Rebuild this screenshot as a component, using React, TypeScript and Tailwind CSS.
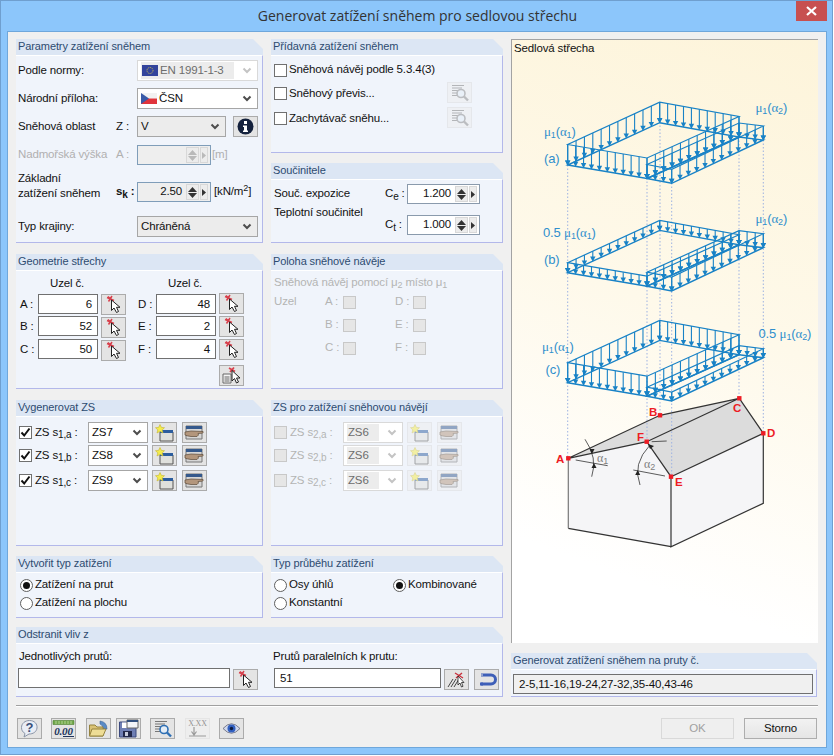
import type { ReactNode } from "react";

type Pt = [number, number];

// roof corners in plan, relative to corner A of each snow load drawing
const PLAN: Record<string, Pt> = {
  A: [0, 0],
  B: [92, -42.3],
  C: [171.3, -28],
  F: [79.3, 13.5],
  E: [104, 18.3],
  D: [195.6, -25],
};
const BLUE = "#1882c6";

function Panel({ title, className, bodyClass, children }: { title: string; className?: string; bodyClass?: string; children?: ReactNode }) {
  return (
    <div className={`flex flex-col ${className ?? ""}`}>
      <div className="h-[16px] shrink-0 bg-[#dce6f4] pl-[2px] text-[11px] leading-[15px] text-[#2d4b70] tracking-[-0.1px] [clip-path:polygon(0_0,calc(100%-10px)_0,100%_10px,100%_100%,0_100%)]">
        {title}
      </div>
      <div className={`flex-1 border-t border-r border-b border-t-white border-r-[#b3b8ea] border-b-[#b3b8ea] bg-[#f0f4fb] ${bodyClass ?? ""}`}>{children}</div>
    </div>
  );
}

function Chevron({ off }: { off?: boolean }) {
  return (
    <svg width="10" height="7" viewBox="0 0 10 7" className="shrink-0">
      <path d="M1.5 1.5 L5 5 L8.5 1.5" fill="none" stroke={off ? "#c4c4c4" : "#4d4d4d"} strokeWidth="2" />
    </svg>
  );
}

function Combo({ value, className, gray, off, flag }: { value: string; className?: string; gray?: boolean; off?: boolean; flag?: ReactNode }) {
  return (
    <div
      className={`flex h-[21px] items-center justify-between border pl-[3px] pr-[5px] ${off ? "border-[#d9d9d9] bg-white text-[#6d6d6d]" : "border-[#a6a6a6]"} ${gray ? "bg-[#ececec]" : off ? "" : "bg-white"} ${className ?? ""}`}
    >
      <span className={`flex h-[17px] flex-1 items-center gap-[1px] leading-none ${off ? "mr-[8px] bg-[#ececec] pl-[1px]" : ""}`}>
        {flag}
        {value}
      </span>
      <Chevron off={off} />
    </div>
  );
}

function Spin({ value, className, off, gray }: { value?: string; className?: string; off?: boolean; gray?: boolean }) {
  const c = off ? "#b9b9b9" : "#333";
  return (
    <div className={`flex h-[20px] items-center border border-[#7f9db9] ${gray ? "bg-[#eeeeee]" : "bg-white"} ${className ?? ""}`}>
      <span className="flex-1 pr-[4px] text-right leading-none">{value}</span>
      <span className="flex h-[16px] w-[13px] flex-col items-center justify-center gap-[1px] border border-[#d8d8d8] bg-[#ececec]">
        <svg width="9" height="5"><path d="M4.5 0 L9 5 H0 Z" fill={c} /></svg>
        <svg width="9" height="5"><path d="M0 0 H9 L4.5 5 Z" fill={c} /></svg>
      </span>
      <span className="ml-[1px] mr-[2px] flex h-[16px] w-[8px] items-center justify-center border border-[#d8d8d8] bg-[#ececec]">
        <svg width="4" height="7"><path d="M0 0 L4 3.5 L0 7 Z" fill={c} /></svg>
      </span>
    </div>
  );
}

function IconBtn({ children, off, className }: { children: ReactNode; off?: boolean; className?: string }) {
  return (
    <div className={`flex h-[21px] w-[25px] shrink-0 items-center justify-center border ${off ? "border-[#dcdcdc] bg-[#eeeeee] opacity-50" : "border-[#ababab] bg-[#e4e4e4]"} ${className ?? ""}`}>
      {children}
    </div>
  );
}

function PickIcon() {
  return (
    <svg width="21" height="19" viewBox="0 0 21 19">
      <path d="M4 2.5 L11 5.5 M9 1 L5.5 6.5 M5 1.5 L9.5 6" stroke="#d8404c" strokeWidth="1.5" />
      <path d="M8.5 5 V15.5 L11 13 L13.5 17.5 L15.5 16.5 L13.5 12.3 H17 Z" fill="#fff" stroke="#222" strokeWidth="1" strokeLinejoin="round" />
    </svg>
  );
}

function PickListIcon() {
  return (
    <svg width="23" height="19" viewBox="0 0 23 19">
      <path d="M3 8 H11 V17 H3 Z" fill="#f4f4f4" stroke="#666" />
      <path d="M4.5 11 H9.5 M4.5 13 H9.5 M4.5 15 H9.5" stroke="#666" />
      <path d="M9 2 L15 5.5 M14 1.5 L10 6" stroke="#d8404c" strokeWidth="1.8" />
      <path d="M12 4.5 V15 L14.5 12.5 L16.5 17 L18.5 16 L16.5 12 H20 Z" fill="#fff" stroke="#222" strokeWidth="1" strokeLinejoin="round" />
    </svg>
  );
}

function NewWinIcon() {
  return (
    <svg width="20" height="18" viewBox="0 0 20 18">
      <path d="M5 8 H18 V17 H5 Z" fill="#dfe0dc" stroke="#555" />
      <path d="M5 6 H18 V9 H5 Z" fill="#2c5d9e" />
      <path d="M5 0.5 L6.4 3.4 L9.5 3.7 L7.2 5.9 L8 9 L5 7.3 L2 9 L2.8 5.9 L0.5 3.7 L3.6 3.4 Z" fill="#f4ec4c" stroke="#c4b62e" strokeWidth="0.6" />
    </svg>
  );
}

function HandWinIcon() {
  return (
    <svg width="21" height="17" viewBox="0 0 21 17">
      <path d="M2 2 H18 V15 H2 Z" fill="#d6d6d6" stroke="#777" />
      <path d="M2 2 H18 V5 H2 Z" fill="#35598c" />
      <path d="M1 8 L7 7 L19 7.5 Q20 8.5 18 9.2 L14 9.5 L14.5 11 L13 12.5 L7 12.5 Q3 12 1 11 Z" fill="#b3967c" stroke="#5c4a3a" strokeWidth="0.7" />
    </svg>
  );
}

function SearchIcon({ gray }: { gray?: boolean }) {
  const c = gray ? "#888" : "#2e6fb4";
  return (
    <svg width="20" height="18" viewBox="0 0 20 18">
      <path d="M2 1.5 H14 M2 4 H12 M2 6.5 H8 M2 9 H7 M2 11.5 H7" stroke="#777" strokeWidth="1" />
      <circle cx="11" cy="9.5" r="4" fill="#e4edf6" stroke={c} strokeWidth="1.6" />
      <path d="M14 12.5 L18 16.5" stroke={c} strokeWidth="2.4" />
    </svg>
  );
}

function CheckBox({ checked, off }: { checked?: boolean; off?: boolean }) {
  return (
    <div className={`flex h-[13px] w-[13px] shrink-0 items-center justify-center border ${off ? "border-[#c8c8c8] bg-[#e6e6e6]" : "border-[#707070] bg-white"}`}>
      {checked && (
        <svg width="11" height="11" viewBox="0 0 11 11">
          <path d="M1.5 5.5 L4.2 8.5 L9.5 1.5" fill="none" stroke="#111" strokeWidth="2" />
        </svg>
      )}
    </div>
  );
}

function Radio({ label, checked, className }: { label: string; checked?: boolean; className?: string }) {
  return (
    <div className={`flex items-center gap-[1px] ${className ?? ""}`}>
      <div className="flex h-[13px] w-[13px] shrink-0 items-center justify-center rounded-full border border-[#5f5f5f] bg-white">
        {checked && <div className="h-[7px] w-[7px] rounded-full bg-[#111]" />}
      </div>
      <span className="pl-[1px] leading-none">{label}</span>
    </div>
  );
}

function NodeRow({ name, value, btnOffset, className }: { name: string; value: string; btnOffset: string; className?: string }) {
  return (
    <div className={`flex h-[20px] items-start ${className ?? ""}`}>
      <span className="w-[20px] shrink-0 pl-[2px] leading-[20px]">{name} :</span>
      <div className="h-[20px] w-[60px] border border-[#707070] bg-white pr-[5px] text-right leading-[18px]">{value}</div>
      <IconBtn className={`ml-[3px] ${btnOffset}`}>
        <PickIcon />
      </IconBtn>
    </div>
  );
}

function ZsRow({ sub, value, off, className }: { sub: string; value: string; off?: boolean; className?: string }) {
  return (
    <div className={`flex h-[21px] items-center ${className ?? ""}`}>
      <CheckBox checked={!off} off={off} />
      <span className={`ml-[3px] w-[53px] whitespace-nowrap leading-none ${off ? "text-[#b4b4b4]" : ""}`}>
        ZS s<sub className="text-[10px]">{sub}</sub> :
      </span>
      <Combo value={value} off={off} className="w-[60px]" />
      <IconBtn off={off} className="ml-[4px]"><NewWinIcon /></IconBtn>
      <IconBtn off={off} className="ml-[5px]"><HandWinIcon /></IconBtn>
    </div>
  );
}

function Mu({ i, a, pre }: { i: string; a: string; pre?: string }) {
  return (
    <>
      {pre}
      <tspan fontFamily="'Liberation Serif', serif">μ</tspan>
      <tspan fontSize="9" dy="2">1</tspan>
      <tspan dy="-2">(</tspan>
      <tspan fontFamily="'Liberation Serif', serif">α</tspan>
      <tspan fontSize="9" dy="2">{i}</tspan>
      <tspan dy="-2">{a}</tspan>
    </>
  );
}

function edgeArrows(p: Pt, q: Pt, n: number, y0: number, h: number) {
  const out = [];
  for (let i = 0; i <= n; i++) {
    const x = 567.7 + p[0] + ((q[0] - p[0]) * i) / n;
    const y = y0 + p[1] + ((q[1] - p[1]) * i) / n;
    out.push(<path key={`l${p[0]}-${q[0]}-${i}`} d={`M${x} ${y - h} V${y - 3}`} stroke={BLUE} strokeWidth="1.1" />);
    out.push(<path key={`h${p[0]}-${q[0]}-${i}`} d={`M${x - 2.7} ${y - 4.6} H${x + 2.7} L${x} ${y + 0.5} Z`} fill={BLUE} />);
  }
  return out;
}

function Slope({ pts, ns, y0, h }: { pts: Pt[]; ns: number[]; y0: number; h: number }) {
  const s = (dy: number) => pts.map((p) => `${567.7 + p[0]},${y0 + p[1] + dy}`).join(" ");
  return (
    <g>
      {pts.map((p, i) => edgeArrows(p, pts[(i + 1) % 4], ns[i], y0, h))}
      <polygon points={s(0)} fill="none" stroke={BLUE} strokeWidth="1.4" />
      <polygon points={s(-h)} fill="none" stroke={BLUE} strokeWidth="1.2" />
    </g>
  );
}

function LoadSet({ y0, h1, h2 }: { y0: number; h1: number; h2: number }) {
  const { A, B, C, F, E, D } = PLAN;
  return (
    <g>
      <Slope pts={[F, E, D, C]} ns={[3, 11, 3, 11]} y0={y0} h={h2} />
      <Slope pts={[A, F, C, B]} ns={[10, 11, 10, 11]} y0={y0} h={h1} />
    </g>
  );
}

function Diagram() {
  const n = { A: [568.3, 458.3], B: [660, 415.3], C: [739.3, 398.3], D: [763.3, 433.3], E: [671, 476.7], F: [646.7, 441.7] };
  const dots: [number, number, number][] = [
    [567.7, 165, 458],
    [647, 178, 441],
    [660, 122, 415],
    [671.7, 183, 476],
    [739, 137, 398],
    [763.3, 140, 433],
  ];
  return (
    <svg viewBox="511 39 308 604" className="block h-[604px] w-[308px]" fontFamily="'Liberation Sans', sans-serif">
      <polygon points="568.3,458.3 646.7,441.7 671,476.7 671,546.7 568.3,528.3" fill="#f5f5f7" />
      <polygon points="671,476.7 763.3,433.3 763.3,503.3 671,546.7" fill="#f5f5f7" />
      <polygon points="568.3,458.3 660,415.3 739.3,398.3 763.3,433.3 671,476.7 646.7,441.7" fill="#dcdcdc" />
      {dots.map(([x, a, b]) => (
        <path key={x} d={`M${x} ${a} V${b}`} stroke="#9db2e2" strokeWidth="1" strokeDasharray="1.5 2" />
      ))}
      <LoadSet y0={165} h1={20.5} h2={14} />
      <LoadSet y0={272.7} h1={10} h2={14} />
      <LoadSet y0={382.7} h1={20} h2={9} />
      <g fontSize="13" fill="#2f8fcd">
        <text x="544" y="136"><Mu i="1" a=")" /></text>
        <text x="755.5" y="112"><Mu i="2" a=")" /></text>
        <text x="544" y="163">(a)</text>
        <text x="543" y="237"><Mu i="1" a=")" pre="0.5 " /></text>
        <text x="755.5" y="223"><Mu i="2" a=")" /></text>
        <text x="544" y="264">(b)</text>
        <text x="542" y="351"><Mu i="1" a=")" /></text>
        <text x="758.5" y="338"><Mu i="2" a=")" pre="0.5 " /></text>
        <text x="545.5" y="374">(c)</text>
      </g>
      <g fill="none" stroke="#333" strokeWidth="1.2">
        <path d="M568.3 458.3 L660 415.3 L739.3 398.3 L646.7 441.7 Z" />
        <path d="M739.3 398.3 L763.3 433.3 L671 476.7 L646.7 441.7" />
        <path d="M763.3 433.3 V503.3 L671 546.7 V476.7" />
        <path d="M671 546.7 L568.3 528.3" />
        <path d="M568.3 458.3 V528.3" stroke="#777" />
        <path d="M575.7 460 L607.7 465.7 M633.3 470 L665 476 M651.7 441.7 L666.7 441" strokeWidth="0.8" />
        <path d="M585 439.3 Q598 458 591.7 476.7 M650 445 Q632 464 640 485" strokeWidth="0.8" />
      </g>
      <g fill="#222">
        <path d="M589.5 449 H594.5 L592 454 Z" />
        <path d="M594 463 L591.5 468 H596.5 Z" />
        <path d="M637.7 470 L635.2 475 H640.2 Z" />
        <path d="M648 444 L654 446 L650 449 Z" />
      </g>
      <g fontSize="12" fill="#808080">
        <text x="597" y="462" fontFamily="'Liberation Serif', serif">α<tspan fontSize="9" dy="2" fontFamily="'Liberation Sans', sans-serif">1</tspan></text>
        <text x="644" y="468" fontFamily="'Liberation Serif', serif">α<tspan fontSize="9" dy="2" fontFamily="'Liberation Sans', sans-serif">2</tspan></text>
      </g>
      {Object.values(n).map(([x, y]) => (
        <rect key={x} x={x - 2.2} y={y - 2.2} width="4.4" height="4.4" fill="#ed1c24" />
      ))}
      <g fontSize="11.5" fontWeight="700" fill="#ed1c24">
        <text x="556" y="463">A</text>
        <text x="649" y="416">B</text>
        <text x="733" y="412">C</text>
        <text x="767" y="437">D</text>
        <text x="675" y="486">E</text>
        <text x="637" y="441">F</text>
      </g>
    </svg>
  );
}

function ToolIcon({ kind }: { kind: string }) {
  if (kind === "help")
    return (
      <svg width="21" height="19" viewBox="0 0 21 19">
        <path d="M10.5 1.5 C15.5 1.5 18.5 5 18 9 C17.5 13 14 15 10 15 L5 18 L6 14.5 C3.5 13 2.5 11 2.5 8.5 C2.5 4.5 6 1.5 10.5 1.5 Z" fill="#e9edf5" stroke="#8a94a6" />
        <text x="10.5" y="13" textAnchor="middle" fontSize="13" fontWeight="700" fill="#3a4f7a" fontFamily="'Liberation Sans', sans-serif">?</text>
      </svg>
    );
  if (kind === "zero")
    return (
      <svg width="23" height="18" viewBox="0 0 23 18">
        <path d="M1 0.5 H22 V4.5 H1 Z" fill="#72a84a" stroke="#4f7f33" strokeWidth="0.6" />
        <path d="M4 1 V4 M7 1 V4 M10 1 V4 M13 1 V4 M16 1 V4 M19 1 V4" stroke="#cfe6b8" strokeWidth="0.7" />
        <text x="11.5" y="14.5" textAnchor="middle" fontSize="11" fontStyle="italic" fontWeight="700" fill="#20345c" fontFamily="'Liberation Serif', serif">0.00</text>
        <path d="M11 16.5 H22" stroke="#20345c" />
      </svg>
    );
  if (kind === "open")
    return (
      <svg width="21" height="19" viewBox="0 0 21 19">
        <path d="M12 2 Q19 3 19 10 L15 10 Q15 6 12 5 Z" fill="#5a8bc6" stroke="#3d6598" strokeWidth="0.6" />
        <path d="M1.5 6 H7 L9 8 H15 V17 H1.5 Z" fill="#d9c276" stroke="#96833f" />
        <path d="M1.5 17 L4 10 H18 L15 17 Z" fill="#eedd96" stroke="#96833f" />
      </svg>
    );
  if (kind === "save")
    return (
      <svg width="21" height="19" viewBox="0 0 21 19">
        <path d="M1.5 3 H15 L18 6 V18 H1.5 Z" fill="#6f7fb4" stroke="#3c4a7e" />
        <path d="M4 3.5 H13 V9 H4 Z" fill="#fff" />
        <path d="M9 1 H20 V9 H9 Z" fill="#f3f4f8" stroke="#666" />
        <path d="M9 1 H20 V3 H9 Z" fill="#32507e" />
        <path d="M5 12 H14 V18 H5 Z" fill="#22284a" />
        <path d="M7 13 H10 V17 H7 Z" fill="#c8cedd" />
      </svg>
    );
  if (kind === "units")
    return (
      <svg width="23" height="19" viewBox="0 0 23 19">
        <text x="11.5" y="7" textAnchor="middle" fontSize="8" fill="#333" fontFamily="'Liberation Serif', serif">X.XX</text>
        <path d="M8 8 V15 M5.5 12.5 L8 16 L10.5 12.5 M3 17 H20" fill="none" stroke="#444" strokeWidth="1.2" />
      </svg>
    );
  return (
    <svg width="19" height="13" viewBox="0 0 19 13">
      <path d="M1 6.5 Q9.5 -3 18 6.5 Q9.5 16 1 6.5 Z" fill="#cfd8ee" stroke="#556" strokeWidth="0.7" />
      <circle cx="9.5" cy="6.5" r="4" fill="#3260c0" />
      <circle cx="9.5" cy="6.5" r="1.7" fill="#0e1c40" />
    </svg>
  );
}

export default function App() {
  return (
    <div className="relative h-[756px] w-[834px] overflow-hidden bg-white font-['Liberation_Sans',sans-serif] text-[11.5px] tracking-[-0.15px] text-[#111]">
      <div className="flex h-[755px] w-[833px] flex-col border border-[#6f9fcf] bg-[#8cc6fb]">
        <div className="flex h-[30px] shrink-0 items-center justify-center pb-[1px] pl-[2px] font-['Open_Sans',sans-serif] text-[14px] tracking-normal text-[#333]">
          Generovat zatížení sněhem pro sedlovou střechu
        </div>
        <div className="absolute right-[7px] top-[1px] flex h-[20px] w-[31px] items-center justify-center bg-[#c75050]">
          <svg width="11" height="10" viewBox="0 0 11 10">
            <path d="M1 1 L10 9 M10 1 L1 9" stroke="#fff" strokeWidth="2.2" />
          </svg>
        </div>

        <div className="mx-[6px] h-[717px] w-[820px] border border-[#6fa7db] bg-[#f0f0f0] px-[8px] pt-[7px]">
          <div className="flex gap-[8px]">
            <div className="w-[487px] shrink-0">
              <div className="flex gap-[8px]">
                {/* left column */}
                <div className="w-[247px] shrink-0">
                  <Panel title="Parametry zatížení sněhem" className="h-[204px]" bodyClass="pl-[2px] pt-[4px]">
                    <div className="flex h-[21px] items-center">
                      <span className="w-[119px]">Podle normy:</span>
                      <Combo
                        value="EN 1991-1-3"
                        off
                        className="w-[121px]"
                        flag={
                          <svg width="16" height="11" viewBox="0 0 16 11" className="mr-[1px]">
                            <rect width="16" height="11" fill="#33449c" />
                            <circle cx="8" cy="5.5" r="3" fill="none" stroke="#d9c84c" strokeWidth="1" strokeDasharray="1 1" />
                          </svg>
                        }
                      />
                    </div>
                    <div className="mt-[7px] flex h-[21px] items-center">
                      <span className="w-[119px]">Národní příloha:</span>
                      <Combo
                        value="ČSN"
                        className="w-[121px]"
                        flag={
                          <svg width="16" height="11" viewBox="0 0 16 11" className="mr-[1px]">
                            <rect width="16" height="5.5" fill="#f2f2f2" />
                            <rect y="5.5" width="16" height="5.5" fill="#e0343c" />
                            <path d="M0 0 L8 5.5 L0 11 Z" fill="#3a5aa8" />
                          </svg>
                        }
                      />
                    </div>
                    <div className="mt-[7px] flex h-[21px] items-center">
                      <span className="w-[98px]">Sněhová oblast</span>
                      <span className="w-[21px]">Z :</span>
                      <Combo value="V" gray className="w-[89px]" />
                      <IconBtn className="ml-[7px]">
                        <svg width="17" height="17" viewBox="0 0 17 17">
                          <circle cx="8.5" cy="8.5" r="8" fill="#14213d" />
                          <rect x="7" y="3" width="3" height="3" fill="#fff" />
                          <path d="M6 7.5 H10 V12.5 H11 V14 H6 V12.5 H7 V9 H6 Z" fill="#fff" />
                        </svg>
                      </IconBtn>
                    </div>
                    <div className="mt-[8px] flex h-[20px] items-center">
                      <span className="w-[98px] text-[#b0b0b0]">Nadmořská výška</span>
                      <span className="w-[21px] text-[#b0b0b0]">A :</span>
                      <Spin off gray className="w-[74px]" />
                      <span className="ml-[1px] text-[#b0b0b0]">[m]</span>
                    </div>
                    <div className="mt-[17px] flex h-[20px] items-center">
                      <span className="w-[98px] translate-y-[-6px] leading-[15px]">
                        Základní<br />zatížení sněhem
                      </span>
                      <span className="w-[21px] whitespace-nowrap font-bold">
                        s<sub className="text-[10px]">k</sub> :
                      </span>
                      <Spin value="2.50" gray className="w-[74px]" />
                      <span className="ml-[3px] whitespace-nowrap">
                        [kN/m<sup className="text-[9px]">2</sup>]
                      </span>
                    </div>
                    <div className="mt-[14px] flex h-[21px] items-center">
                      <span className="w-[119px]">Typ krajiny:</span>
                      <Combo value="Chráněná" gray className="w-[121px]" />
                    </div>
                  </Panel>

                  <Panel title="Geometrie střechy" className="mt-[11px] h-[135px]" bodyClass="pl-[2px] pt-[5px]">
                    <div className="flex">
                      <div className="w-[118px]">
                        <div className="h-[18px] pl-[32px] leading-[15px]">Uzel č.</div>
                        <NodeRow name="A" value="6" btnOffset="" />
                        <NodeRow name="B" value="52" btnOffset="mt-[1px]" className="mt-[2px]" />
                        <NodeRow name="C" value="50" btnOffset="mt-[1px]" className="mt-[3px]" />
                      </div>
                      <div>
                        <div className="h-[18px] pl-[32px] leading-[15px]">Uzel č.</div>
                        <NodeRow name="D" value="48" btnOffset="-mt-[1px]" />
                        <NodeRow name="E" value="2" btnOffset="" className="mt-[2px]" />
                        <NodeRow name="F" value="4" btnOffset="" className="mt-[3px]" />
                        <IconBtn className="ml-[83px] mt-[6px]">
                          <PickListIcon />
                        </IconBtn>
                      </div>
                    </div>
                  </Panel>

                  <Panel title="Vygenerovat ZS" className="mt-[11px] h-[146px]" bodyClass="pl-[3px] pt-[5px]">
                    <ZsRow sub="1,a" value="ZS7" />
                    <ZsRow sub="1,b" value="ZS8" className="mt-[2px]" />
                    <ZsRow sub="1,c" value="ZS9" className="mt-[4px]" />
                  </Panel>

                  <Panel title="Vytvořit typ zatížení" className="mt-[10px] h-[62px]" bodyClass="pl-[4px] pt-[3px]">
                    <Radio label="Zatížení na prut" checked className="h-[18px]" />
                    <Radio label="Zatížení na plochu" className="h-[18px]" />
                  </Panel>
                </div>

                {/* middle column */}
                <div className="w-[232px] shrink-0">
                  <Panel title="Přídavná zatížení sněhem" className="h-[114px]" bodyClass="pl-[3px] pt-[6px]">
                    <div className="flex h-[16px] items-center gap-[1px]">
                      <CheckBox />
                      <span className="pl-[1px]">Sněhová návěj podle 5.3.4(3)</span>
                    </div>
                    <div className="mt-[5px] flex h-[21px] items-center gap-[1px]">
                      <CheckBox />
                      <span className="w-[145px] pl-[1px]">Sněhový převis...</span>
                      <IconBtn off className="ml-[13px] -mt-[2px]"><SearchIcon gray /></IconBtn>
                    </div>
                    <div className="mt-[4px] flex h-[21px] items-center gap-[1px]">
                      <CheckBox />
                      <span className="w-[145px] pl-[1px]">Zachytávač sněhu...</span>
                      <IconBtn off className="ml-[13px] -mt-[2px]"><SearchIcon gray /></IconBtn>
                    </div>
                  </Panel>

                  <Panel title="Součinitele" className="mt-[10px] h-[80px]" bodyClass="flex pl-[3px] pt-[4px]">
                    <div className="w-[111px] shrink-0 leading-[19px]">
                      Souč. expozice<br />Teplotní součinitel
                    </div>
                    <div className="flex flex-col gap-[11px]">
                      <div className="flex items-center">
                        <span className="w-[22px] whitespace-nowrap">C<sub className="text-[10px]">e</sub> :</span>
                        <Spin value="1.200" className="w-[73px] border-[#8a9aac]" />
                      </div>
                      <div className="flex items-center">
                        <span className="w-[22px] whitespace-nowrap">C<sub className="text-[10px]">t</sub> :</span>
                        <Spin value="1.000" className="w-[73px] border-[#8a9aac]" />
                      </div>
                    </div>
                  </Panel>

                  <Panel title="Poloha sněhové návěje" className="mt-[11px] h-[135px]" bodyClass="pl-[3px] pt-[3px] text-[#b4b4b4]">
                    <div className="h-[21px] leading-[16px]">Sněhová návěj pomocí μ<sub className="text-[9px]">2</sub> místo μ<sub className="text-[9px]">1</sub></div>
                    {[
                      ["Uzel", "A", "D"],
                      ["", "B", "E"],
                      ["", "C", "F"],
                    ].map(([first, a, b], i) => (
                      <div key={a} className={`flex h-[14px] items-center ${i > 0 ? "mt-[9px]" : ""}`}>
                        <span className="w-[51px]">{first}</span>
                        <span className="w-[18px]">{a} :</span>
                        <CheckBox off />
                        <span className="ml-[39px] w-[18px]">{b} :</span>
                        <CheckBox off />
                      </div>
                    ))}
                  </Panel>

                  <Panel title="ZS pro zatížení sněhovou návějí" className="mt-[11px] h-[146px]" bodyClass="pl-[3px] pt-[5px]">
                    <ZsRow sub="2,a" value="ZS6" off />
                    <ZsRow sub="2,b" value="ZS6" off className="mt-[2px]" />
                    <ZsRow sub="2,c" value="ZS6" off className="mt-[4px]" />
                  </Panel>

                  <Panel title="Typ průběhu zatížení" className="mt-[10px] h-[62px]" bodyClass="pl-[3px] pt-[3px]">
                    <div className="flex h-[18px]">
                      <Radio label="Osy úhlů" className="w-[119px]" />
                      <Radio label="Kombinované" checked />
                    </div>
                    <Radio label="Konstantní" className="h-[18px]" />
                  </Panel>
                </div>
              </div>

              <Panel title="Odstranit vliv z" className="mt-[9px] h-[70px]" bodyClass="flex pl-[2px] pt-[4px]">
                <div className="w-[255px] shrink-0">
                  <div className="h-[20px] pl-[1px] pt-[1px] leading-[15px]">Jednotlivých prutů:</div>
                  <div className="flex items-start">
                    <div className="h-[20px] w-[212px] border border-[#707070] bg-white" />
                    <IconBtn className="ml-[3px] mt-[1px]"><PickIcon /></IconBtn>
                  </div>
                </div>
                <div>
                  <div className="h-[20px] pt-[1px] leading-[15px]">Prutů paralelních k prutu:</div>
                  <div className="flex items-start">
                    <div className="ml-[1px] h-[20px] w-[167px] border border-[#707070] bg-white pl-[5px] leading-[18px]">51</div>
                    <IconBtn className="ml-[3px] mt-[1px]">
                      <svg width="21" height="18" viewBox="0 0 21 18">
                        <path d="M2 16 L7 8 M5 16 L10 8 M8 16 L13 8" stroke="#444" strokeWidth="1" />
                        <path d="M9 2 L17 7 M16 2 L10 7" stroke="#c8303c" strokeWidth="1.4" />
                        <path d="M12 5 V14 L14 12 L15.5 16 L17 15.3 L15.5 11.5 H18 Z" fill="#fff" stroke="#222" strokeWidth="0.8" />
                      </svg>
                    </IconBtn>
                    <IconBtn className="ml-[5px] mt-[1px]">
                      <svg width="21" height="16" viewBox="0 0 21 16">
                        <path d="M7 3 H15 A4.5 4.5 0 0 1 15 12 H4" fill="none" stroke="#3e5fb8" strokeWidth="3" />
                        <path d="M6 1 V5 M6 10 V14" stroke="#3e5fb8" strokeWidth="1" />
                      </svg>
                    </IconBtn>
                  </div>
                </div>
              </Panel>
            </div>

            {/* picture and member list */}
            <div className="w-[307px] shrink-0">
              <div className="relative h-[604px] border-l border-t border-[#a3a3a3] bg-[linear-gradient(200deg,#fdf4da_0%,#fef9ea_45%,#ffffff_85%)]">
                <div className="absolute left-[2px] top-[1px] leading-[15px]">Sedlová střecha</div>
                <div className="-ml-[1px] -mt-[1px]"><Diagram /></div>
              </div>
              <Panel title="Generovat zatížení sněhem na pruty č." className="mt-[10px] h-[44px] w-[306px]" bodyClass="pl-[2px] pt-[4px]">
                <div className="h-[20px] w-[300px] border border-[#707070] bg-[#f0f0f0] pl-[5px] leading-[18px]">2-5,11-16,19-24,27-32,35-40,43-46</div>
              </Panel>
            </div>
          </div>

          <div className="mt-[8px] h-[2px] w-[802px] border-t border-b border-t-[#a0a0a0] border-b-white" />

          <div className="mt-[11px] flex h-[21px] w-[802px] items-center justify-between px-[1px]">
            <div className="flex">
              <IconBtn><ToolIcon kind="help" /></IconBtn>
              <IconBtn className="ml-[9px]"><ToolIcon kind="zero" /></IconBtn>
              <IconBtn className="ml-[10px]"><ToolIcon kind="open" /></IconBtn>
              <IconBtn className="ml-[5px]"><ToolIcon kind="save" /></IconBtn>
              <IconBtn className="ml-[9px]"><SearchIcon /></IconBtn>
              <IconBtn off className="ml-[10px]"><ToolIcon kind="units" /></IconBtn>
              <IconBtn className="ml-[9px]"><ToolIcon kind="eye" /></IconBtn>
            </div>
            <div className="flex gap-[10px]">
              <div className="flex h-[21px] w-[73px] items-center justify-center border border-[#d9d9d9] bg-[#efefef] text-[#a0a0a0]">OK</div>
              <div className="flex h-[21px] w-[73px] items-center justify-center border border-[#adadad] bg-linear-to-b from-[#f2f2f2] to-[#e5e5e5]">Storno</div>
            </div>
          </div>
        </div>
      </div>
    </div>
  );
}
